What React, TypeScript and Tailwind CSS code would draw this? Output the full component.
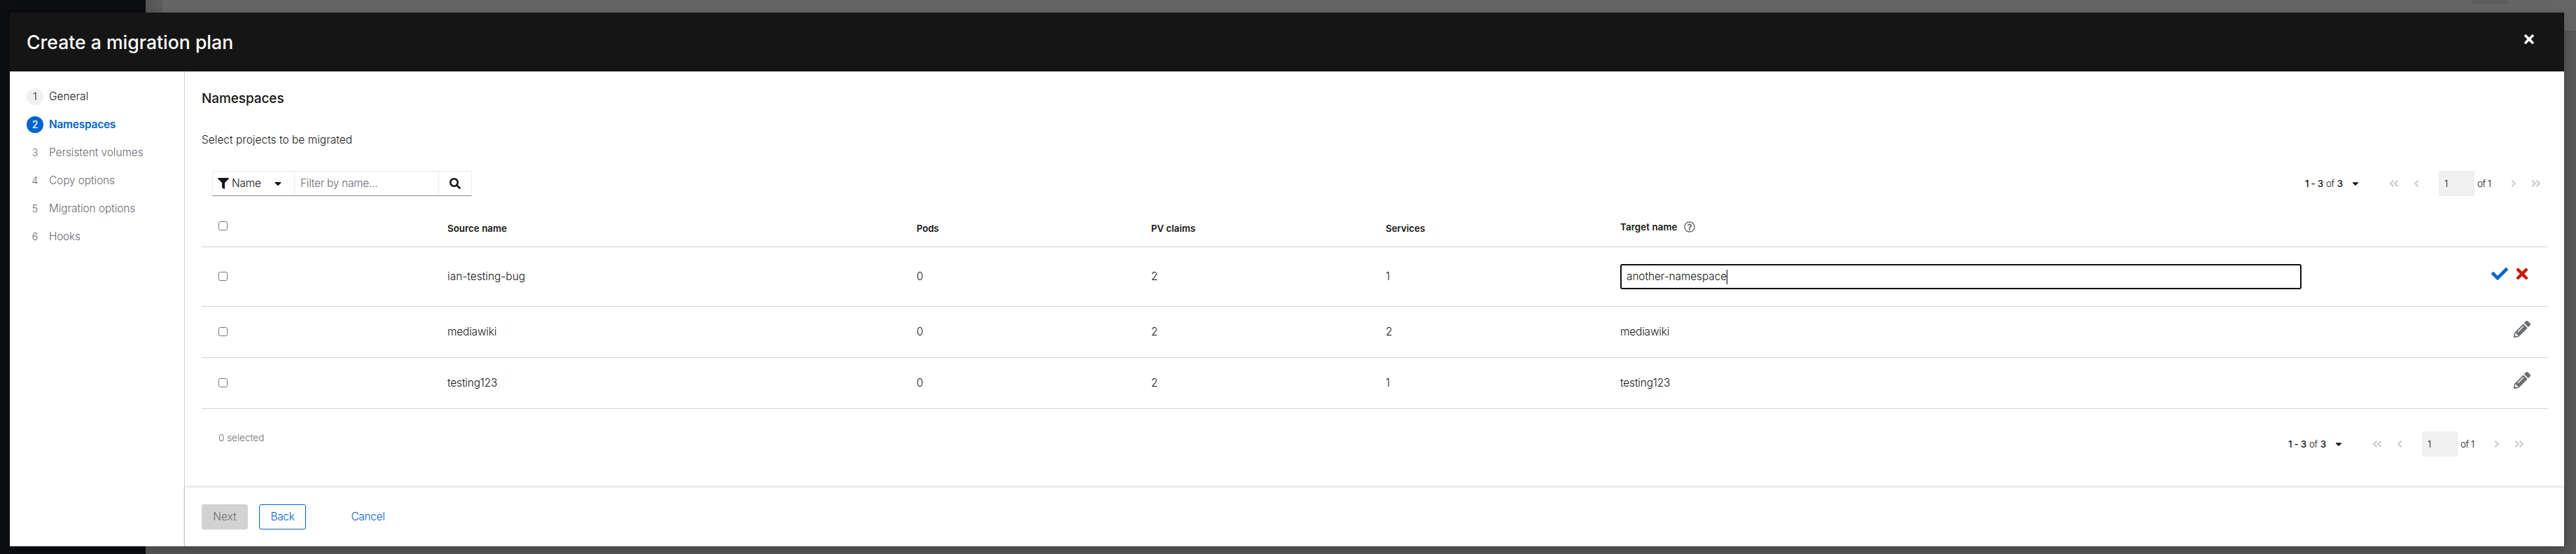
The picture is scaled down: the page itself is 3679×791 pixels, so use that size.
import type { ReactNode } from "react";
import {
  FaAngleDoubleLeft,
  FaAngleDoubleRight,
  FaAngleLeft,
  FaAngleRight,
  FaCaretDown,
  FaCheck,
  FaFilter,
  FaPencilAlt,
  FaRegQuestionCircle,
  FaSearch,
  FaTimes,
} from "react-icons/fa";

const steps = [
  { label: "General", tracking: "tracking-[0.05px]" },
  { label: "Namespaces", tracking: "tracking-[-0.2px]" },
  { label: "Persistent volumes", tracking: "tracking-[-0.03px]" },
  { label: "Copy options", tracking: "tracking-[-0.08px]" },
  { label: "Migration options", tracking: "tracking-[-0.05px]" },
  { label: "Hooks", tracking: "tracking-[-0.2px]" },
];

const rows = [
  { name: "ian-testing-bug", pods: 0, claims: 2, services: 1, target: "another-namespace", editing: true },
  { name: "mediawiki", pods: 0, claims: 2, services: 2, target: "mediawiki", editing: false },
  { name: "testing123", pods: 0, claims: 2, services: 1, target: "testing123", editing: false },
];

const gridCols = "grid grid-cols-[335px_670px_335px_335px_335px_1fr]";

function Step({ index, label, tracking }: { index: number; label: string; tracking: string }) {
  const current = index === 1;
  const circle = current
    ? "bg-[#0066cc] text-white font-medium"
    : index === 0
      ? "bg-[#f0f0f0] text-[#151515]"
      : "text-[#6a6e73]";
  const text = current ? "font-semibold text-[#0066cc]" : index === 0 ? "text-[#151515]" : "text-[#6a6e73]";
  return (
    <li className="flex h-6 items-center">
      <span className={`mr-2 flex size-6 items-center justify-center rounded-full text-sm ${circle}`}>
        {index + 1}
      </span>
      <span className={`${tracking} ${text}`}>{label}</span>
    </li>
  );
}

function Checkbox() {
  return <span className="ml-6 block size-[13px] rounded-[2.5px] border border-[#767676] bg-white" />;
}

function Pagination() {
  return (
    <div className="flex h-9 items-center text-[13.5px] text-[#151515]">
      <div className="flex w-[54px] justify-between whitespace-nowrap tracking-[-0.3px]">
        <span className="font-medium">1 - 3</span>
        <span>of</span>
        <span className="font-medium">3</span>
      </div>
      <FaCaretDown className="ml-[11px] size-[14px]" />
      <div className="ml-10 flex items-center text-base text-[#d2d2d2]">
        <FaAngleDoubleLeft />
        <FaAngleLeft className="ml-4" />
      </div>
      <div className="ml-6 flex h-9 w-[51px] items-center bg-[#f0f0f0] pl-2">1</div>
      <span className="ml-1 w-[21px] whitespace-nowrap tracking-[-0.6px]">of 1</span>
      <div className="ml-[23px] flex items-center text-base text-[#d2d2d2]">
        <FaAngleRight />
        <FaAngleDoubleRight className="ml-4" />
      </div>
    </div>
  );
}

function HeaderCell({ children }: { children: ReactNode }) {
  return <div className="pl-4">{children}</div>;
}

export default function App() {
  return (
    <div className="relative h-[791px] w-[3679px] overflow-hidden font-['Inter','Noto_Sans',sans-serif] text-[15.4px] font-[360] leading-6 text-[#151515]">
      <div className="flex h-full">
        <div className="w-52 bg-[#0c0e11]" />
        <div className="flex flex-1 flex-col bg-[#5a5a5a]">
          <div className="flex h-[45px] border-b border-[#505050]">
            <div className="w-6 bg-gradient-to-r from-[#565656] to-[#5e5e5e]" />
            <div className="flex flex-1 justify-end bg-[#666666] pr-[97px]">
              <div className="h-[5px] w-[51px] bg-[#5d5d5d]" />
            </div>
          </div>
        </div>
      </div>

      <div className="absolute left-[14px] top-[18px] flex h-[762px] w-[3648px] flex-col bg-white shadow-[0_16px_32px_0_rgba(3,3,3,0.16),0_0_8px_0_rgba(3,3,3,0.1)]">
        <header className="flex h-[84px] shrink-0 items-center justify-between bg-[#151515] pl-6 text-white">
          <h1 className="text-[26.6px] font-[450] leading-none">Create a migration plan</h1>
          <div className="mr-10 flex w-5 justify-center pb-2">
            <FaTimes className="size-5" />
          </div>
        </header>

        <div className="flex min-h-0 flex-1">
          <nav className="w-[250px] shrink-0 border-r border-[#d2d2d2] pl-6 pt-6">
            <ol className="flex flex-col gap-4">
              {steps.map((s, i) => (
                <Step key={s.label} index={i} label={s.label} tracking={s.tracking} />
              ))}
            </ol>
          </nav>

          <div className="flex flex-1 flex-col">
            <main className="flex-1 px-6 pt-[27px]">
              <h2 className="text-[19px] font-medium leading-6 tracking-[-0.1px]">Namespaces</h2>
              <p className="mt-[35px] tracking-[0.05px]">Select projects to be migrated</p>

              <div className="mt-8 flex items-center justify-between pl-[15px] pr-2">
                <div className="flex h-9 w-[371px] border border-[#ededed] border-b-[#8a8d90]">
                  <div className="flex w-[117px] items-center border-r border-[#ededed] pl-[7px]">
                    <FaFilter className="size-4" />
                    <span className="ml-1 w-[42px] tracking-[-0.2px]">Name</span>
                    <FaCaretDown className="ml-4 size-4" />
                  </div>
                  <div className="w-[206px] border-r border-[#ededed] pl-2 leading-[34px] tracking-[-0.25px] text-[#6a6e73]">
                    Filter by name...
                  </div>
                  <div className="flex flex-1 items-center justify-center">
                    <FaSearch className="size-4" />
                  </div>
                </div>
                <Pagination />
              </div>

              <div className={`${gridCols} mt-[19px] h-[54px] items-center border-b border-[#d2d2d2] text-[13.3px] font-semibold`}>
                <div className="pb-[6px]"><Checkbox /></div>
                <HeaderCell><span className="tracking-[0.05px]">Source name</span></HeaderCell>
                <HeaderCell><span className="tracking-[-0.1px]">Pods</span></HeaderCell>
                <HeaderCell>PV claims</HeaderCell>
                <HeaderCell>Services</HeaderCell>
                <div className="flex items-center pb-[3px] pl-4">
                  <span className="w-[82px] tracking-[0.12px]">Target name</span>
                  <FaRegQuestionCircle className="ml-[9px] size-4 text-[#6a6e73]" />
                </div>
              </div>

              {rows.map((r) => (
                <div
                  key={r.name}
                  className={`${gridCols} items-center border-b border-[#d2d2d2] ${r.editing ? "h-[85px]" : "h-[73px]"}`}
                >
                  <div className="pb-[2px]"><Checkbox /></div>
                  <div className={r.editing ? "pl-4 tracking-[0.04px]" : "pl-4 tracking-[-0.15px]"}>{r.name}</div>
                  <div className="pl-4">{r.pods}</div>
                  <div className="pl-4">{r.claims}</div>
                  <div className="pl-4">{r.services}</div>
                  <div className="flex items-center justify-between pl-4 pr-6">
                    {r.editing ? (
                      <div className="flex h-9 w-[973px] items-center rounded-[3px] border-2 border-[#101010] pl-[7px] tracking-[-0.07px]">
                        {r.target}
                        <span className="h-[21px] w-px bg-black" />
                      </div>
                    ) : (
                      <span className="tracking-[-0.15px]">{r.target}</span>
                    )}
                    {r.editing ? (
                      <div className="flex items-center gap-2 pb-2 text-2xl">
                        <FaCheck className="text-[#0066cc]" />
                        <FaTimes className="w-6 text-[#c9190b]" />
                      </div>
                    ) : (
                      <FaPencilAlt className="mb-2 size-6 text-[#6a6e73]" />
                    )}
                  </div>
                </div>
              ))}

              <div className="flex items-start justify-between pl-6 pr-8 pt-8">
                <span className="-mt-[3px] text-[13.5px] text-[#6a6e73]">0 selected</span>
                <Pagination />
              </div>
            </main>

            <footer className="flex h-[84px] shrink-0 items-center bg-white pl-6 shadow-[0_-1px_4px_0_rgba(3,3,3,0.18)]">
              <button className="h-9 w-[66px] rounded-[3px] bg-[#d2d2d2] text-[#6a6e73]">Next</button>
              <button className="ml-4 h-9 w-[67px] rounded-[3px] border border-[#0066cc] tracking-[-0.25px] text-[#0066cc]">
                Back
              </button>
              <button className="ml-12 h-9 w-[81px] tracking-[-0.3px] text-[#0066cc]">Cancel</button>
            </footer>
          </div>
        </div>
      </div>
    </div>
  );
}
